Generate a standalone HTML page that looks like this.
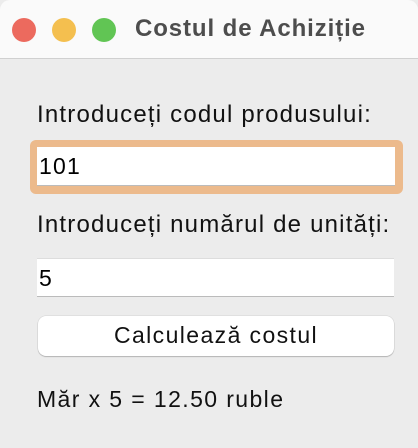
<!DOCTYPE html>
<html><head><meta charset="utf-8"><style>
body{margin:0;width:418px;height:448px;background:#ececec;font-family:"Liberation Sans",sans-serif;position:relative;overflow:hidden}
.tb{position:absolute;left:0;top:0;width:418px;height:58px;background:#fafafa;border-bottom:1px solid #d0d0d0;border-radius:10px 10px 0 0}
.c{position:absolute;top:18px;width:24px;height:24px;border-radius:50%}
.t{position:absolute;left:135px;top:15px;font-size:24px;font-weight:bold;color:#4d4d4d;letter-spacing:0.9px}
.l{position:absolute;left:37px;font-size:24px;color:#111;letter-spacing:1.2px;white-space:nowrap}
.in{position:absolute;background:#fff;font-size:23px;color:#000;box-sizing:border-box;padding-left:2px;border-bottom:1px solid #bbb;letter-spacing:1.2px}
</style></head><body>
<div class="tb"></div>
<div class="c" style="left:12px;background:#ec6a5e;"></div>
<div class="c" style="left:52px;background:#f4bf4f;"></div>
<div class="c" style="left:92px;background:#61c554;"></div>
<div class="t">Costul de Achiziție</div>
<div class="l" style="top:101px">Introduceți codul produsului:</div>
<div style="position:absolute;left:30px;top:140px;width:373px;height:54px;background:#ecba8c;border-radius:6px"></div>
<div class="in" style="left:37px;top:147px;width:358px;height:39px;line-height:39px">101</div>
<div class="l" style="top:211px">Introduceți numărul de unități:</div>
<div class="in" style="left:37px;top:258px;width:357px;height:39px;line-height:39px;border-top:1px solid #ddd">5</div>
<div style="position:absolute;left:38px;top:316px;width:356px;height:40px;background:#fff;border-radius:8px;box-shadow:0 1px 1px rgba(0,0,0,.2),0 0 0 .5px rgba(0,0,0,.1);text-align:center;line-height:38px;font-size:23px;letter-spacing:1.4px;color:#111">Calculează costul</div>
<div class="l" style="top:386px;font-size:23px;letter-spacing:1.4px">Măr x 5 = 12.50 ruble</div>
</body></html>
